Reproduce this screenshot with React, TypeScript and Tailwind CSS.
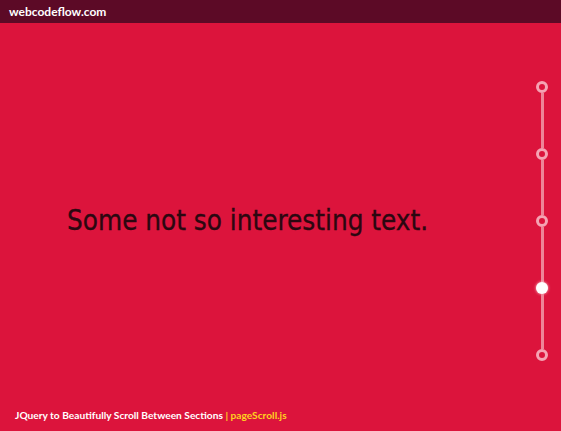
import React from "react";

const dots = [0, 1, 2, 3, 4];
const active = 3;

export default function App() {
  return (
    <div className="relative flex h-[431px] w-[561px] flex-col overflow-hidden bg-[#dc143c]">
      <header className="flex h-[23px] shrink-0 items-center bg-[#5c0a26] pl-[9px]">
        <span className="font-['Lato',sans-serif] text-[12px] font-bold text-white">
          webcodeflow.com
        </span>
      </header>

      <section className="relative flex flex-1 items-center pb-[12px] pl-[67px]">
        <h1 className="font-['DejaVu_Sans_Condensed','DejaVu_Sans',sans-serif] text-[27.6px] font-medium leading-none text-[#2b0710] [-webkit-text-stroke:0.3px_#2b0710]">
          Some not so interesting text.
        </h1>

        {/* page dots on the right edge */}
        <nav className="absolute right-[13px] top-0 bottom-[12px] flex flex-col items-center justify-center">
          {dots.map((i) => (
            <React.Fragment key={i}>
              {i > 0 && <div className="h-[55px] w-[3px] bg-[#ee8598]" />}
              <div
                className={
                  i === active
                    ? "h-[12px] w-[12px] rounded-full bg-white shadow-[0_0_3px_#ffd0d8]"
                    : "h-[12px] w-[12px] rounded-full border-[3px] border-[#f5a3b3] bg-[#dc143c]"
                }
              />
            </React.Fragment>
          ))}
        </nav>
      </section>

      <footer className="absolute bottom-[11px] left-[15px] font-['Lato',sans-serif] text-[10.2px] font-bold leading-none text-white">
        JQuery to Beautifully Scroll Between Sections{" "}
        <span className="text-[#ffd21f]">| pageScroll.js</span>
      </footer>
    </div>
  );
}
